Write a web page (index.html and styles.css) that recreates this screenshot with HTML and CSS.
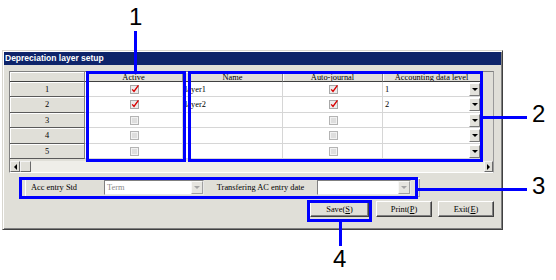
FILE: index.html
```html
<!DOCTYPE html>
<html>
<head>
<meta charset="utf-8">
<link rel="stylesheet" href="styles.css">
</head>
<body>
<div class="page">
  <div class="window">
    <div class="titlebar">Depreciation layer setup</div>
    <div class="client">
      <div class="grid">
        <div class="gmain">
          <div class="cells">
            <div class="hd corner"></div>
            <div class="hd">Active</div>
            <div class="hd">Name</div>
            <div class="hd">Auto-journal</div>
            <div class="hd">Accounting data level</div>

            <div class="rh">1</div>
            <div class="dc cb"><svg class="chk" width="10" height="10" viewBox="0 0 10 10"><rect x="0.5" y="1.5" width="8" height="8" fill="#ececec" stroke="#a8a8a8"/><path d="M2.2 5.4 L4 7.4 L8.4 1.4" fill="none" stroke="#d80000" stroke-width="1.4"/></svg></div>
            <div class="dc txt">layer1</div>
            <div class="dc cb"><svg class="chk" width="10" height="10" viewBox="0 0 10 10"><rect x="0.5" y="1.5" width="8" height="8" fill="#ececec" stroke="#a8a8a8"/><path d="M2.2 5.4 L4 7.4 L8.4 1.4" fill="none" stroke="#d80000" stroke-width="1.4"/></svg></div>
            <div class="dc dd"><span class="ddv">1</span><span class="ddbtn"><i class="tri"></i></span></div>

            <div class="rh">2</div>
            <div class="dc cb"><svg class="chk" width="10" height="10" viewBox="0 0 10 10"><rect x="0.5" y="1.5" width="8" height="8" fill="#ececec" stroke="#a8a8a8"/><path d="M2.2 5.4 L4 7.4 L8.4 1.4" fill="none" stroke="#d80000" stroke-width="1.4"/></svg></div>
            <div class="dc txt">layer2</div>
            <div class="dc cb"><svg class="chk" width="10" height="10" viewBox="0 0 10 10"><rect x="0.5" y="1.5" width="8" height="8" fill="#ececec" stroke="#a8a8a8"/><path d="M2.2 5.4 L4 7.4 L8.4 1.4" fill="none" stroke="#d80000" stroke-width="1.4"/></svg></div>
            <div class="dc dd"><span class="ddv">2</span><span class="ddbtn"><i class="tri"></i></span></div>

            <div class="rh">3</div>
            <div class="dc cb"><svg class="chk" width="10" height="10" viewBox="0 0 10 10"><rect x="0.5" y="1.5" width="8" height="8" fill="#dedede" stroke="#b4b4b4"/><rect x="1.5" y="2.5" width="6" height="6" fill="none" stroke="#f2f2f2"/></svg></div>
            <div class="dc txt"></div>
            <div class="dc cb"><svg class="chk" width="10" height="10" viewBox="0 0 10 10"><rect x="0.5" y="1.5" width="8" height="8" fill="#dedede" stroke="#b4b4b4"/><rect x="1.5" y="2.5" width="6" height="6" fill="none" stroke="#f2f2f2"/></svg></div>
            <div class="dc dd"><span class="ddv"></span><span class="ddbtn"><i class="tri"></i></span></div>

            <div class="rh">4</div>
            <div class="dc cb"><svg class="chk" width="10" height="10" viewBox="0 0 10 10"><rect x="0.5" y="1.5" width="8" height="8" fill="#dedede" stroke="#b4b4b4"/><rect x="1.5" y="2.5" width="6" height="6" fill="none" stroke="#f2f2f2"/></svg></div>
            <div class="dc txt"></div>
            <div class="dc cb"><svg class="chk" width="10" height="10" viewBox="0 0 10 10"><rect x="0.5" y="1.5" width="8" height="8" fill="#dedede" stroke="#b4b4b4"/><rect x="1.5" y="2.5" width="6" height="6" fill="none" stroke="#f2f2f2"/></svg></div>
            <div class="dc dd"><span class="ddv"></span><span class="ddbtn"><i class="tri"></i></span></div>

            <div class="rh">5</div>
            <div class="dc cb"><svg class="chk" width="10" height="10" viewBox="0 0 10 10"><rect x="0.5" y="1.5" width="8" height="8" fill="#dedede" stroke="#b4b4b4"/><rect x="1.5" y="2.5" width="6" height="6" fill="none" stroke="#f2f2f2"/></svg></div>
            <div class="dc txt"></div>
            <div class="dc cb"><svg class="chk" width="10" height="10" viewBox="0 0 10 10"><rect x="0.5" y="1.5" width="8" height="8" fill="#dedede" stroke="#b4b4b4"/><rect x="1.5" y="2.5" width="6" height="6" fill="none" stroke="#f2f2f2"/></svg></div>
            <div class="dc dd"><span class="ddv"></span><span class="ddbtn"><i class="tri"></i></span></div>
          </div>
          <div class="filler"></div>
        </div>
        <div class="hscroll">
          <span class="sbtn"><i class="tri-l"></i></span>
          <span class="sthumb"></span>
          <span class="strack"></span>
          <span class="sbtn sbtn-r"><i class="tri-r"></i></span>
        </div>
      </div>

      <div class="fields">
        <div class="lbl lbl1">Acc entry Std</div>
        <div class="combo combo1"><span class="cval">Term</span><span class="cbtn"><i class="tri dis"></i></span></div>
        <div class="lbl lbl2">Transfering AC entry date</div>
        <div class="combo combo2"><span class="cval"></span><span class="cbtn"><i class="tri dis"></i></span></div>
      </div>

      <div class="buttons">
        <div class="btn btn-save">Save(<u>S</u>)</div>
        <div class="btn btn-print">Print(<u>P</u>)</div>
        <div class="btn btn-exit">Exit(<u>E</u>)</div>
      </div>
    </div>
  </div>

  <div class="co box1"></div>
  <div class="co box2"></div>
  <div class="co box3"></div>
  <div class="co box4"></div>
  <div class="ln ln1"></div>
  <div class="ln ln2"></div>
  <div class="ln ln3"></div>
  <div class="ln ln4"></div>
  <div class="num n1">1</div>
  <div class="num n2">2</div>
  <div class="num n3">3</div>
  <div class="num n4">4</div>
</div>
</body>
</html>
```

FILE: styles.css
```css
* { box-sizing: border-box; }
html, body { margin: 0; padding: 0; }
body {
  width: 556px;
  height: 280px;
  background: #ffffff;
  font-family: "Liberation Serif", "Times New Roman", serif;
  font-size: 8.4px;
  color: #000;
  overflow: hidden;
}
.page {
  position: relative;
  width: 556px;
  height: 280px;
  padding: 50px 0 0 2px;
}

/* window */
.window {
  width: 501px;
  height: 180px;
  padding: 1px;
  background: #e0dfd8;
  border: 1px solid;
  border-color: #d8d6cf #404040 #404040 #d8d6cf;
  box-shadow: inset 1px 1px #ffffff, inset -1px -1px #808080;
  display: flex;
  flex-direction: column;
}
.titlebar {
  height: 13px;
  background: #0e246a;
  color: #ffffff;
  font-family: "Liberation Sans", Arial, sans-serif;
  font-weight: bold;
  font-size: 8.5px;
  line-height: 13px;
  padding-left: 1px;
  white-space: nowrap;
}
.client {
  flex: 1;
  padding: 6px 7px 0 5px;
}

/* grid */
.grid {
  width: 485px;
  height: 102px;
  border: 1px solid;
  border-color: #808080 #9a9a9a #ffffff #808080;
  background: #e0dfd8;
  display: flex;
  flex-direction: column;
}
.gmain {
  height: 89px;
  display: flex;
}
.cells {
  display: grid;
  grid-template-columns: 75px 98px 100px 100px 98px;
  grid-template-rows: 10px 15px 16px 15px 16px 15px;
  align-self: flex-start;
}
.filler { flex: 1; }
.hd {
  background: #e0dfd8;
  border-right: 1px solid #8c8c8c;
  border-bottom: 1px solid #404040;
  box-shadow: inset 1px 1px #ffffff;
  text-align: center;
  line-height: 10px;
  padding-top: 1px;
  white-space: nowrap;
  overflow: hidden;
}
.rh {
  background: #e0dfd8;
  border-right: 1px solid #808080;
  border-bottom: 1px solid #5a5a5a;
  box-shadow: inset 1px 1px #ffffff;
  display: flex;
  align-items: center;
  justify-content: center;
}
.dc {
  background: #ffffff;
  border-right: 1px solid #d6d6d6;
  border-bottom: 1px solid #d6d6d6;
  display: flex;
  align-items: center;
  white-space: nowrap;
}
.cb { justify-content: center; }
.cb .chk { display: block; margin-left: 2px; margin-top: -1px; }
.txt { padding-left: 2px; }
.dd { padding-left: 2px; justify-content: space-between; border-right: none; }
.ddbtn {
  width: 11px;
  height: 13px;
  margin-right: 1px;
  background: #e3e2dc;
  border: 1px solid;
  border-color: #ffffff #7a7a7a #7a7a7a #ffffff;
  display: flex;
  align-items: center;
  justify-content: center;
}
.tri {
  display: block;
  width: 0;
  height: 0;
  border-left: 3px solid transparent;
  border-right: 3px solid transparent;
  border-top: 3px solid #000000;
}
.tri.dis { border-top-color: #a4a4a4; }

/* horizontal scrollbar */
.hscroll {
  height: 11px;
  margin-top: auto;
  display: flex;
}
.sbtn, .sthumb {
  width: 10px;
  height: 11px;
  background: #e0dfd8;
  border: 1px solid;
  border-color: #f4f4f4 #6a6a6a #6a6a6a #f4f4f4;
  display: flex;
  align-items: center;
  justify-content: center;
}
.sthumb { width: 11px; }
.sbtn-r { width: 9px; }
.strack { flex: 1; background: #efeee9; }
.tri-l {
  display: block;
  width: 0; height: 0;
  border-top: 3px solid transparent;
  border-bottom: 3px solid transparent;
  border-right: 3px solid #000;
}
.tri-r {
  display: block;
  width: 0; height: 0;
  border-top: 3px solid transparent;
  border-bottom: 3px solid transparent;
  border-left: 3px solid #000;
}

/* fields row */
.fields {
  display: flex;
  height: 19px;
  margin: 5px 0 0 16px;
  width: 395px;
  background: #e0dfd8;
  box-shadow: inset 1px 1px #ffffff, inset -1px -1px #a0a0a0;
  align-items: center;
}
.lbl {
  height: 19px;
  display: flex;
  align-items: center;
  white-space: nowrap;
}
.lbl1 { width: 79px; padding-left: 6px; }
.lbl2 { width: 113px; justify-content: center; }
.combo {
  height: 15px;
  background: #ffffff;
  border: 1px solid;
  border-color: #808080 #e8e8e8 #e8e8e8 #808080;
  display: flex;
  align-items: center;
  justify-content: space-between;
}
.combo1 { width: 100px; }
.combo2 { width: 94px; }
.cval { padding-left: 2px; color: #8a8a8a; }
.cbtn {
  width: 12px;
  height: 13px;
  background: #e6e5e0;
  border: 1px solid;
  border-color: #f8f8f8 #a0a0a0 #a0a0a0 #f8f8f8;
  display: flex;
  align-items: center;
  justify-content: center;
}

/* buttons */
.buttons {
  display: flex;
  justify-content: flex-end;
  gap: 7px;
  margin-top: 4px;
  width: 485px;
}
.btn {
  height: 16px;
  background: #e0dfd8;
  border: 1px solid;
  border-color: #ffffff #404040 #404040 #ffffff;
  box-shadow: inset -1px -1px #808080;
  display: flex;
  align-items: center;
  justify-content: center;
  white-space: nowrap;
}
.btn-save { width: 59px; }
.btn-print { width: 56px; }
.btn-exit { width: 56px; margin-left: -1px; }

/* callout overlays */
.co {
  position: absolute;
  border: 3px solid #0000ff;
}
.box1 { left: 86px; top: 71px; width: 100px; height: 91px; }
.box2 { left: 188px; top: 71px; width: 295px; height: 91px; }
.box3 { left: 19px; top: 177px; width: 399px; height: 22px; }
.box4 { left: 307px; top: 200px; width: 65px; height: 22px; }
.ln { position: absolute; background: #0000ff; }
.ln1 { left: 134px; top: 31px; width: 3px; height: 40px; }
.ln2 { left: 483px; top: 116px; width: 44px; height: 3px; }
.ln3 { left: 418px; top: 188px; width: 109px; height: 3px; }
.ln4 { left: 339px; top: 222px; width: 3px; height: 24px; }
.num {
  position: absolute;
  font-family: "Liberation Sans", Arial, sans-serif;
  font-size: 24px;
  line-height: 24px;
  color: #000;
}
.n1 { left: 129px; top: 5px; }
.n2 { left: 532px; top: 102px; }
.n3 { left: 532px; top: 174px; }
.n4 { left: 333px; top: 247px; }
```
